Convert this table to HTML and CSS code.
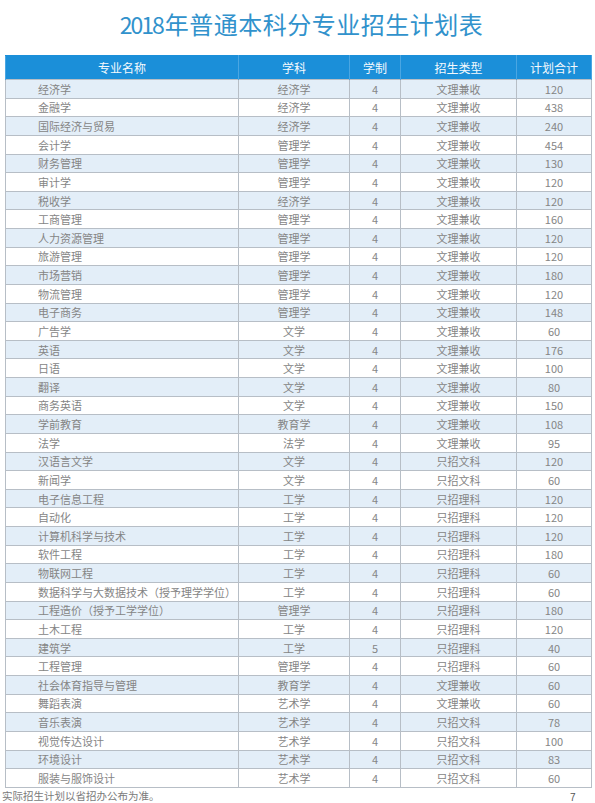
FILE: index.html
```html
<!DOCTYPE html>
<html lang="zh">
<head>
<meta charset="utf-8">
<title>2018年普通本科分专业招生计划表</title>
<link rel="stylesheet" href="styles.css">
</head>
<body>
<div class="page">
  <h1 class="title"><span class="year">2018</span>年普通本科分专业招生计划表</h1>
  <table class="plan">
    <colgroup>
      <col class="c-name"><col class="c-subj"><col class="c-len"><col class="c-type"><col class="c-num">
    </colgroup>
    <thead>
      <tr><th>专业名称</th><th>学科</th><th>学制</th><th>招生类型</th><th>计划合计</th></tr>
    </thead>
    <tbody>
      <tr><td class="name">经济学</td><td>经济学</td><td>4</td><td>文理兼收</td><td>120</td></tr>
      <tr><td class="name">金融学</td><td>经济学</td><td>4</td><td>文理兼收</td><td>438</td></tr>
      <tr><td class="name">国际经济与贸易</td><td>经济学</td><td>4</td><td>文理兼收</td><td>240</td></tr>
      <tr><td class="name">会计学</td><td>管理学</td><td>4</td><td>文理兼收</td><td>454</td></tr>
      <tr><td class="name">财务管理</td><td>管理学</td><td>4</td><td>文理兼收</td><td>130</td></tr>
      <tr><td class="name">审计学</td><td>管理学</td><td>4</td><td>文理兼收</td><td>120</td></tr>
      <tr><td class="name">税收学</td><td>经济学</td><td>4</td><td>文理兼收</td><td>120</td></tr>
      <tr><td class="name">工商管理</td><td>管理学</td><td>4</td><td>文理兼收</td><td>160</td></tr>
      <tr><td class="name">人力资源管理</td><td>管理学</td><td>4</td><td>文理兼收</td><td>120</td></tr>
      <tr><td class="name">旅游管理</td><td>管理学</td><td>4</td><td>文理兼收</td><td>120</td></tr>
      <tr><td class="name">市场营销</td><td>管理学</td><td>4</td><td>文理兼收</td><td>180</td></tr>
      <tr><td class="name">物流管理</td><td>管理学</td><td>4</td><td>文理兼收</td><td>120</td></tr>
      <tr><td class="name">电子商务</td><td>管理学</td><td>4</td><td>文理兼收</td><td>148</td></tr>
      <tr><td class="name">广告学</td><td>文学</td><td>4</td><td>文理兼收</td><td>60</td></tr>
      <tr><td class="name">英语</td><td>文学</td><td>4</td><td>文理兼收</td><td>176</td></tr>
      <tr><td class="name">日语</td><td>文学</td><td>4</td><td>文理兼收</td><td>100</td></tr>
      <tr><td class="name">翻译</td><td>文学</td><td>4</td><td>文理兼收</td><td>80</td></tr>
      <tr><td class="name">商务英语</td><td>文学</td><td>4</td><td>文理兼收</td><td>150</td></tr>
      <tr><td class="name">学前教育</td><td>教育学</td><td>4</td><td>文理兼收</td><td>108</td></tr>
      <tr><td class="name">法学</td><td>法学</td><td>4</td><td>文理兼收</td><td>95</td></tr>
      <tr><td class="name">汉语言文学</td><td>文学</td><td>4</td><td>只招文科</td><td>120</td></tr>
      <tr><td class="name">新闻学</td><td>文学</td><td>4</td><td>只招文科</td><td>60</td></tr>
      <tr><td class="name">电子信息工程</td><td>工学</td><td>4</td><td>只招理科</td><td>120</td></tr>
      <tr><td class="name">自动化</td><td>工学</td><td>4</td><td>只招理科</td><td>120</td></tr>
      <tr><td class="name">计算机科学与技术</td><td>工学</td><td>4</td><td>只招理科</td><td>120</td></tr>
      <tr><td class="name">软件工程</td><td>工学</td><td>4</td><td>只招理科</td><td>180</td></tr>
      <tr><td class="name">物联网工程</td><td>工学</td><td>4</td><td>只招理科</td><td>60</td></tr>
      <tr><td class="name">数据科学与大数据技术（授予理学学位）</td><td>工学</td><td>4</td><td>只招理科</td><td>60</td></tr>
      <tr><td class="name">工程造价（授予工学学位）</td><td>管理学</td><td>4</td><td>只招理科</td><td>180</td></tr>
      <tr><td class="name">土木工程</td><td>工学</td><td>4</td><td>只招理科</td><td>120</td></tr>
      <tr><td class="name">建筑学</td><td>工学</td><td>5</td><td>只招理科</td><td>40</td></tr>
      <tr><td class="name">工程管理</td><td>管理学</td><td>4</td><td>只招理科</td><td>60</td></tr>
      <tr><td class="name">社会体育指导与管理</td><td>教育学</td><td>4</td><td>文理兼收</td><td>60</td></tr>
      <tr><td class="name">舞蹈表演</td><td>艺术学</td><td>4</td><td>文理兼收</td><td>60</td></tr>
      <tr><td class="name">音乐表演</td><td>艺术学</td><td>4</td><td>只招文科</td><td>78</td></tr>
      <tr><td class="name">视觉传达设计</td><td>艺术学</td><td>4</td><td>只招文科</td><td>100</td></tr>
      <tr><td class="name">环境设计</td><td>艺术学</td><td>4</td><td>只招文科</td><td>83</td></tr>
      <tr><td class="name">服装与服饰设计</td><td>艺术学</td><td>4</td><td>只招文科</td><td>60</td></tr>
    </tbody>
  </table>
  <div class="foot">
    <p class="note">实际招生计划以省招办公布为准。</p>
    <span class="pageno">7</span>
  </div>
</div>
</body>
</html>
```
FILE: styles.css
```css
html, body {
  margin: 0;
  padding: 0;
  background: #ffffff;
}
.page {
  width: 595px;
  height: 803px;
  overflow: hidden;
  font-family: "Noto Sans CJK SC", "Noto Sans", sans-serif;
}
.title {
  margin: 0;
  height: 55px;
  box-sizing: border-box;
  padding: 6px 0 0 8px;
  text-align: center;
  font-size: 24px;
  line-height: 36px;
  font-weight: 400;
  color: #3192cc;
  letter-spacing: 0.5px;
}
.title .year {
  font-size: 23px;
  letter-spacing: -2px;
  margin-right: 2px;
}
.plan {
  margin-left: 5px;
  width: 586px;
  table-layout: fixed;
  border-collapse: collapse;
  font-size: 11px;
  color: #858585;
}
.c-name { width: 233px; }
.c-subj { width: 111px; }
.c-len { width: 51px; }
.c-type { width: 116px; }
.c-num { width: 75px; }
.plan th {
  height: 23px;
  padding: 0;
  background: #1b8fd9;
  color: #f4f9fd;
  font-weight: 400;
  font-size: 12px;
  border-left: 1px solid #4aa6e2;
  border-right: 1px solid #4aa6e2;
  border-top: 1px solid #1b8fd9;
  text-align: center;
}
.plan tbody tr {
  height: 18.63px;
}
.plan td {
  padding: 0;
  text-align: center;
  border: 1px solid #b7bec6;
  line-height: 16px;
  white-space: nowrap;
}
.plan tbody tr:nth-child(odd) td {
  background: #e3eef8;
}
.plan td.name {
  text-align: left;
  padding-left: 32px;
}
.foot {
  position: relative;
  height: 17px;
}
.note {
  margin: 0;
  padding: 0 0 0 2px;
  font-size: 10.5px;
  line-height: 15px;
  color: #7a7a7a;
}
.pageno {
  position: absolute;
  left: 570px;
  top: 4px;
  font-size: 10px;
  line-height: 12px;
  color: #555;
  font-family: "Liberation Sans", sans-serif;
}
```
